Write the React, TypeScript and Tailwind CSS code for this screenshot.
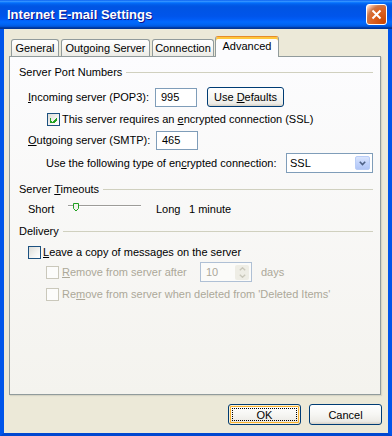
import clsx from "clsx";

const titleBg =
  "bg-[linear-gradient(180deg,#0058EE_0%,#3A93FF_4%,#288EFF_6%,#127DFF_8%,#036FFC_10%,#0262EE_14%,#0057E5_20%,#0054E3_24%,#0055EB_56%,#005BF5_66%,#026AFE_76%,#0062EF_86%,#0052D6_92%,#0040AB_94%,#003092_100%)]";

const btnCls =
  "relative flex items-center justify-center rounded-[3px] border border-[#003C74] bg-[linear-gradient(180deg,#FFFFFF_0%,#F6F6F3_50%,#ECEBE6_86%,#D6D0C5_100%)]";

function U({ children }: { children: React.ReactNode }) {
  return <span className="underline underline-offset-[1px]">{children}</span>;
}

function GroupHeader({ children }: { children: React.ReactNode }) {
  return (
    <div className="flex h-[14px] items-center">
      <span className="whitespace-nowrap">{children}</span>
      <div className="ml-[4px] h-px flex-1 bg-[#D0D0BF]" />
    </div>
  );
}

function Check({ checked, disabled }: { checked?: boolean; disabled?: boolean }) {
  return (
    <span
      className={clsx(
        "flex h-[13px] w-[13px] shrink-0 items-center justify-center border",
        disabled
          ? "border-[#CAC8BB] bg-[#FCFCFB]"
          : "border-[#1C5180] bg-[linear-gradient(135deg,#DCDCD7_0%,#F4F4F2_60%,#FFFFFF_100%)]",
      )}
    >
      {checked && (
        <svg width="7" height="7" viewBox="0 0 7 7" shapeRendering="crispEdges">
          <path
            d="M0 2h1v3h1v1h1v-1h1v-1h1v-1h1v-1h1v3h-1v1h-1v1h-1v1h-1v1h-1v-1h-1v-1h-1z"
            fill="#21A121"
          />
        </svg>
      )}
    </span>
  );
}

function CloseButton() {
  return (
    <div className="flex h-[21px] w-[21px] items-center justify-center rounded-[3px] border border-white bg-[radial-gradient(circle_at_90%_90%,#CC4600_0%,#DC6527_55%,#CD7546_70%,#FFCCB2_90%,#FFFFFF_100%)]">
      <svg width="11" height="11" viewBox="0 0 11 11">
        <path d="M1.5 1.5 L9.5 9.5 M9.5 1.5 L1.5 9.5" stroke="white" strokeWidth="2" />
      </svg>
    </div>
  );
}

function Tab({ label, width, selected }: { label: string; width: string; selected?: boolean }) {
  return (
    <div
      className={clsx(
        "flex items-center justify-center whitespace-nowrap rounded-t-[3px] border-x border-[#919B9C]",
        width,
        selected
          ? "-mb-px h-[21px] border-t border-t-[#E68B2C] bg-[#FCFCFE] pb-[2px] shadow-[inset_0_2px_#FFC73C]"
          : "h-[17px] border-t bg-[linear-gradient(180deg,#FFFFFF_0%,#F7F7F5_50%,#ECEBE6_100%)]",
      )}
    >
      {label}
    </div>
  );
}

export default function App() {
  return (
    <div className="flex h-[436px] w-[392px] flex-col font-['Liberation_Sans',Arial,sans-serif] text-[11px] leading-[14px] text-black select-none">
      <div className={clsx("flex h-[29px] shrink-0 items-center pl-[7px] pr-[5px]", titleBg)}>
        <span className="flex-1 text-[13px] font-bold text-white [text-shadow:1px_1px_#0F1089]">
          Internet E-mail Settings
        </span>
        <CloseButton />
      </div>

      <div className="flex flex-1 flex-col border-x-4 border-b-[3px] border-x-[#0055EA] border-b-[#0047D0] bg-[#ECE9D8] pt-[7px]">
        <div className="relative z-10 flex h-[20px] items-end pl-[7px]">
          <Tab label="General" width="w-[48px]" />
          <div className="w-[2px]" />
          <Tab label="Outgoing Server" width="w-[89px]" />
          <div className="w-[2px]" />
          <Tab label="Connection" width="w-[62px]" />
          <div className="w-px" />
          <Tab label="Advanced" width="w-[64px]" selected />
        </div>

        <div className="ml-[5px] h-[339px] w-[372px] border border-[#919B9C] bg-[linear-gradient(180deg,#FCFCFE,#F4F3EE)] pl-[9px] pr-[7px] shadow-[1px_1px_1px_rgba(208,206,191,0.75)]">
          <div className="mt-[8px]">
            <GroupHeader>Server Port Numbers</GroupHeader>
          </div>

          <div className="mt-[8px] flex h-[20px] items-center">
            <span className="ml-[9px] w-[127px] shrink-0">
              <U>I</U>ncoming server (POP3):
            </span>
            <div className="flex h-[19px] w-[42px] items-center border border-[#7F9DB9] bg-white pl-[5px]">995</div>
            <div className={clsx(btnCls, "ml-[10px] h-[20px] w-[77px]")}>
              <span>
                Use <U>D</U>efaults
              </span>
            </div>
          </div>

          <div className="mt-[5px] flex h-[14px] items-center">
            <span className="ml-[28px]">
              <Check checked />
            </span>
            <span className="ml-[2px] whitespace-nowrap">
              This server requires an <U>e</U>ncrypted connection (SSL)
            </span>
          </div>

          <div className="mt-[4px] flex h-[20px] items-center">
            <span className="ml-[9px] w-[128px] shrink-0">
              <U>O</U>utgoing server (SMTP):
            </span>
            <div className="flex h-[19px] w-[42px] items-center border border-[#7F9DB9] bg-white pl-[5px]">465</div>
          </div>

          <div className="mt-[3px] flex h-[20px] items-center">
            <span className="ml-[27px] whitespace-nowrap">
              Use the following type of en<U>c</U>rypted connection:
            </span>
            <div className="ml-auto flex h-[20px] w-[87px] items-center border border-[#7F9DB9] bg-white pl-[3px] pr-[2px]">
              <span className="flex-1">SSL</span>
              <div className="flex h-[14px] w-[15px] items-center justify-center rounded-[2px] border border-[#B9CDF7] bg-[linear-gradient(180deg,#DAE5FD_0%,#C1D3FB_50%,#B1C6F6_100%)]">
                <svg width="7" height="5" viewBox="0 0 7 5">
                  <path d="M0.8 0.8 L3.5 3.5 L6.2 0.8" stroke="#4D6185" strokeWidth="1.6" fill="none" />
                </svg>
              </div>
            </div>
          </div>

          <div className="mt-[9px]">
            <GroupHeader>
              Server <U>T</U>imeouts
            </GroupHeader>
          </div>

          <div className="mt-[6px] flex h-[14px] items-center">
            <span className="ml-[9px] w-[40px] shrink-0">Short</span>
            <div className="relative h-[14px] w-[73px]">
              <div className="absolute left-0 right-0 top-[3px] h-px bg-[#9D9C99]" />
              <div className="absolute left-0 right-0 top-[4px] h-px bg-white" />
              <svg className="absolute left-[5px] top-[1px]" width="6" height="9" viewBox="0 0 6 9">
                <path d="M0.5 0.5 H5.5 V5.5 L3 8 L0.5 5.5 Z" fill="#F3F3EF" stroke="#21A121" strokeWidth="1" />
              </svg>
            </div>
            <span className="ml-[15px] w-[33px] shrink-0">Long</span>
            <span>1 minute</span>
          </div>

          <div className="mt-[8px]">
            <GroupHeader>Delivery</GroupHeader>
          </div>

          <div className="mt-[7px] flex h-[14px] items-center">
            <span className="ml-[9px]">
              <Check />
            </span>
            <span className="ml-[2px] whitespace-nowrap">
              <U>L</U>eave a copy of messages on the server
            </span>
          </div>

          <div className="mt-[3px] flex h-[20px] items-center text-[#ACA899]">
            <span className="ml-[27px]">
              <Check disabled />
            </span>
            <span className="ml-[3px] w-[138px] shrink-0 whitespace-nowrap">
              <U>R</U>emove from server after
            </span>
            <div className="flex h-[20px] w-[52px] items-center border border-[#AFC0D5] bg-[#FBFBF9] pl-[5px] pr-[2px]">
              <span className="flex-1">10</span>
              <div className="flex h-[15px] w-[14px] flex-col items-center justify-center gap-[3px] rounded-[2px] bg-[#EEEDE5]">
                <svg width="7" height="4" viewBox="0 0 7 4">
                  <path d="M0.8 3.2 L3.5 0.8 L6.2 3.2" stroke="#C9C7BA" strokeWidth="1.4" fill="none" />
                </svg>
                <svg width="7" height="4" viewBox="0 0 7 4">
                  <path d="M0.8 0.8 L3.5 3.2 L6.2 0.8" stroke="#C9C7BA" strokeWidth="1.4" fill="none" />
                </svg>
              </div>
            </div>
            <span className="ml-[9px]">days</span>
          </div>

          <div className="mt-[5px] flex h-[14px] items-center text-[#ACA899]">
            <span className="ml-[27px]">
              <Check disabled />
            </span>
            <span className="ml-[3px] whitespace-nowrap">
              Re<U>m</U>ove from server when deleted from 'Deleted Items'
            </span>
          </div>
        </div>

        <div className="mt-[9px] flex justify-end gap-[8px] pr-[6px]">
          <div className={clsx(btnCls, "h-[21px] w-[73px] shadow-[inset_0_0_0_1px_#FFF0CF,inset_0_0_0_2px_#F8B330]")}>
            <span className="absolute inset-[3px] border border-dotted border-black" />
            OK
          </div>
          <div className={clsx(btnCls, "h-[21px] w-[73px]")}>Cancel</div>
        </div>
      </div>
    </div>
  );
}
